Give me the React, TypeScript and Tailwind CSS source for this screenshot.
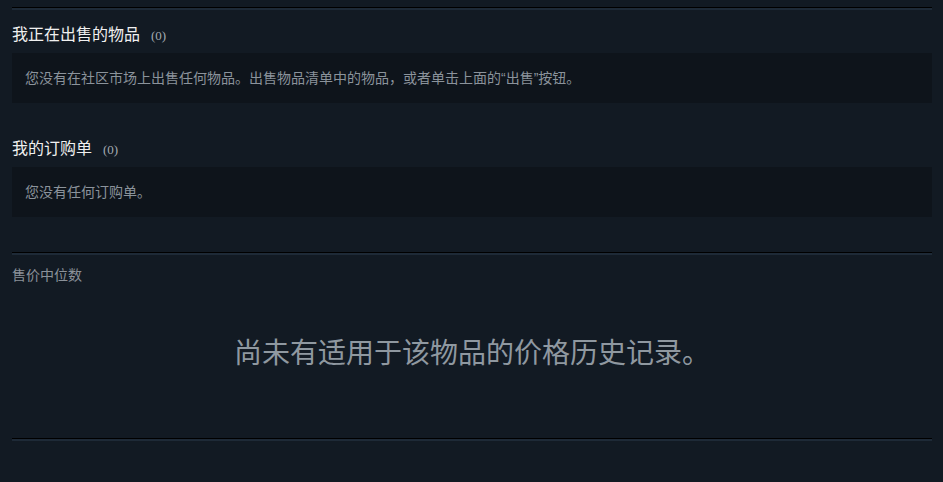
const font = "font-['Microsoft_YaHei','Noto_Sans_CJK_SC',sans-serif]";

function Divider() {
  return <div className="h-[3px] border-t border-black bg-[#1e2a37]" />;
}

function Section({ title, count, body }: { title: string; count: number; body: string }) {
  return (
    <section>
      <h2 className="flex items-baseline text-[16px] leading-[20px] text-[#f0f0f0]">
        {title}
        <span className="ml-[11px] font-['Liberation_Serif',serif] text-[13px] text-[#a3aab1]">({count})</span>
      </h2>
      <div className="mt-[7px] flex h-[50px] items-center bg-[#0e141b] px-[13px] font-['Liberation_Sans','Noto_Sans_CJK_SC',sans-serif] text-[14px] text-[#8b939b]">
        {body}
      </div>
    </section>
  );
}

export default function App() {
  return (
    <div className={`min-h-[482px] bg-[#121a23] pl-[12px] pr-[11px] pt-[7px] ${font}`}>
      <Divider />
      <div className="mt-[13px]">
        <Section
          title="我正在出售的物品"
          count={0}
          body="您没有在社区市场上出售任何物品。出售物品清单中的物品，或者单击上面的“出售”按钮。"
        />
      </div>
      <div className="mt-[34px]">
        <Section title="我的订购单" count={0} body="您没有任何订购单。" />
      </div>
      <div className="mt-[35px]">
        <Divider />
      </div>
      <div className="mt-[10px] text-[14px] leading-[18px] text-[#8a9199]">售价中位数</div>
      <div className="flex h-[155px] items-center justify-center pb-[20px] text-[28px] text-[#8f98a0]">
        尚未有适用于该物品的价格历史记录。
      </div>
      <Divider />
    </div>
  );
}
